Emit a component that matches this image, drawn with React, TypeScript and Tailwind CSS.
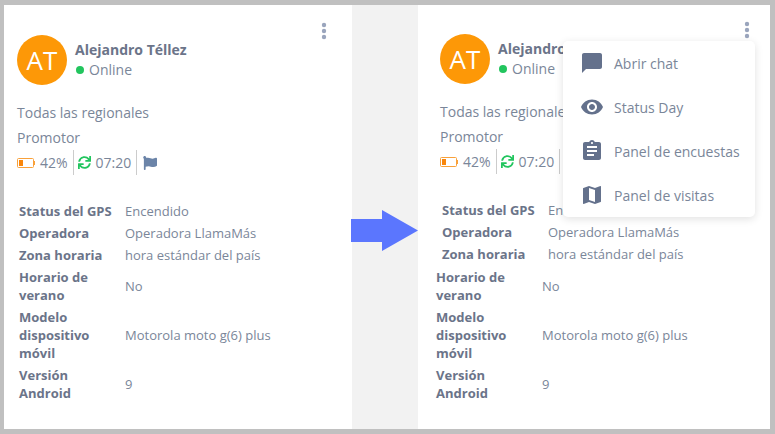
import { FaFlag, FaSync } from 'react-icons/fa';
import { MdChatBubble, MdRemoveRedEye, MdAssignment, MdMap } from 'react-icons/md';

const rows = [
  { label: 'Status del GPS', value: 'Encendido', short: true },
  { label: 'Operadora', value: 'Operadora LlamaMás', short: true },
  { label: 'Zona horaria', value: 'hora estándar del país', short: true },
  { label: 'Horario de verano', value: 'No' },
  { label: 'Modelo dispositivo móvil', value: 'Motorola moto g(6) plus' },
  { label: 'Versión Android', value: '9' },
];

const menuItems = [
  { label: 'Abrir chat', icon: MdChatBubble },
  { label: 'Status Day', icon: MdRemoveRedEye },
  { label: 'Panel de encuestas', icon: MdAssignment },
  { label: 'Panel de visitas', icon: MdMap },
];

const Kebab = () => (
  <svg width="6" height="18" viewBox="0 0 6 18" className="block">
    <circle cx="3" cy="3" r="2.2" fill="#9aa5bd" />
    <circle cx="3" cy="9" r="2.2" fill="#9aa5bd" />
    <circle cx="3" cy="15" r="2.2" fill="#9aa5bd" />
  </svg>
);

const Battery = () => (
  <svg width="18" height="10" viewBox="0 0 18 10" className="block">
    <rect x="0.5" y="0.5" width="16" height="9" rx="1" fill="none" stroke="#f9a13a" />
    <rect x="2" y="2" width="4" height="6" fill="#f9860b" />
    <rect x="17" y="3" width="1" height="4" fill="#f9a13a" />
  </svg>
);

const Card = ({ wide }: { wide?: boolean }) => (
  <div className={`relative bg-white h-full ${wide ? 'w-[352px] pt-[29px] pl-[22px]' : 'w-[348px] pt-[30px] pl-[13px]'}`}>
    <div className={`absolute ${wide ? 'top-[16px] right-[20px]' : 'top-[17px] right-[25px]'}`}>
      <Kebab />
    </div>

    <div className="flex items-center gap-2">
      <div className="w-[50px] h-[50px] rounded-full bg-[#fd9807] text-white text-[26px] flex items-center justify-center">
        AT
      </div>
      <div>
        <div className="font-bold text-[14px] leading-[20px] text-[#6b7489]">Alejandro Téllez</div>
        <div className="flex items-center gap-[5px] text-[14px] leading-[20px]">
          <span className="ml-[1px] w-2 h-2 rounded-full bg-[#22c55e]" />
          Online
        </div>
      </div>
    </div>

    <div className="mt-[18px] leading-[20px]">Todas las regionales</div>
    <div className="mt-[5px] leading-[20px]">Promotor</div>

    <div className="mt-[2px] flex items-center h-[25px]">
      <Battery />
      <span className="ml-[5px] pr-[5px] h-full flex items-center border-r border-[#cccccc]">42%</span>
      <FaSync className="ml-[4px] text-[#22c55e]" size={13} />
      <span className="ml-[5px] pr-[5px] h-full flex items-center border-r border-[#cccccc]">07:20</span>
      <FaFlag className="ml-[6px] text-[#6b84a8]" size={14} />
    </div>

    <div className={`mt-[25px] ${wide ? '-ml-[4px]' : 'ml-[2px]'}`}>
      {rows.map((row) => (
        <div
          key={row.label}
          className={`flex items-center py-[2px] ${row.short && wide ? 'pl-[6px]' : ''} ${wide && row.label === 'Horario de verano' ? 'mt-[1px]' : ''}`}
        >
          <div className="w-[106px] shrink-0 pr-[4px] font-bold text-[13px] leading-[18px] text-[#6b7489]">{row.label}</div>
          <div className="text-[13px] leading-[18px]">{row.value}</div>
        </div>
      ))}
    </div>
  </div>
);

export default function App() {
  return (
    <div
      className="w-[775px] h-[434px] bg-[#c0c0c0] pt-[5px] pb-[5px] pl-[4px] pr-[5px] overflow-hidden text-[14px] text-[#7a8699]"
      style={{ fontFamily: '"Open Sans", sans-serif' }}
    >
      <div className="relative flex h-full">
        <Card />
        <div className="relative w-[66px] bg-[#f2f2f2]">
          <svg width="67" height="41" viewBox="0 0 67 41" className="absolute top-[205px] -left-[1px]">
            <path d="M0 9H31V0L67 20.5L31 41V32H0Z" fill="#5b76fe" />
          </svg>
        </div>
        <Card wide />

        <div className="absolute top-[36px] left-[559px] w-[192px] h-[176px] bg-white rounded-[5px] shadow-[0_2px_8px_rgba(0,0,0,0.12)]">
          {menuItems.map((item) => (
            <div key={item.label} className="flex items-center h-[44px] pl-[17px] gap-[10px]">
              <item.icon size={24} className="text-[#64718c]" />
              <span className="text-[14px]">{item.label}</span>
            </div>
          ))}
        </div>
      </div>
    </div>
  );
}
